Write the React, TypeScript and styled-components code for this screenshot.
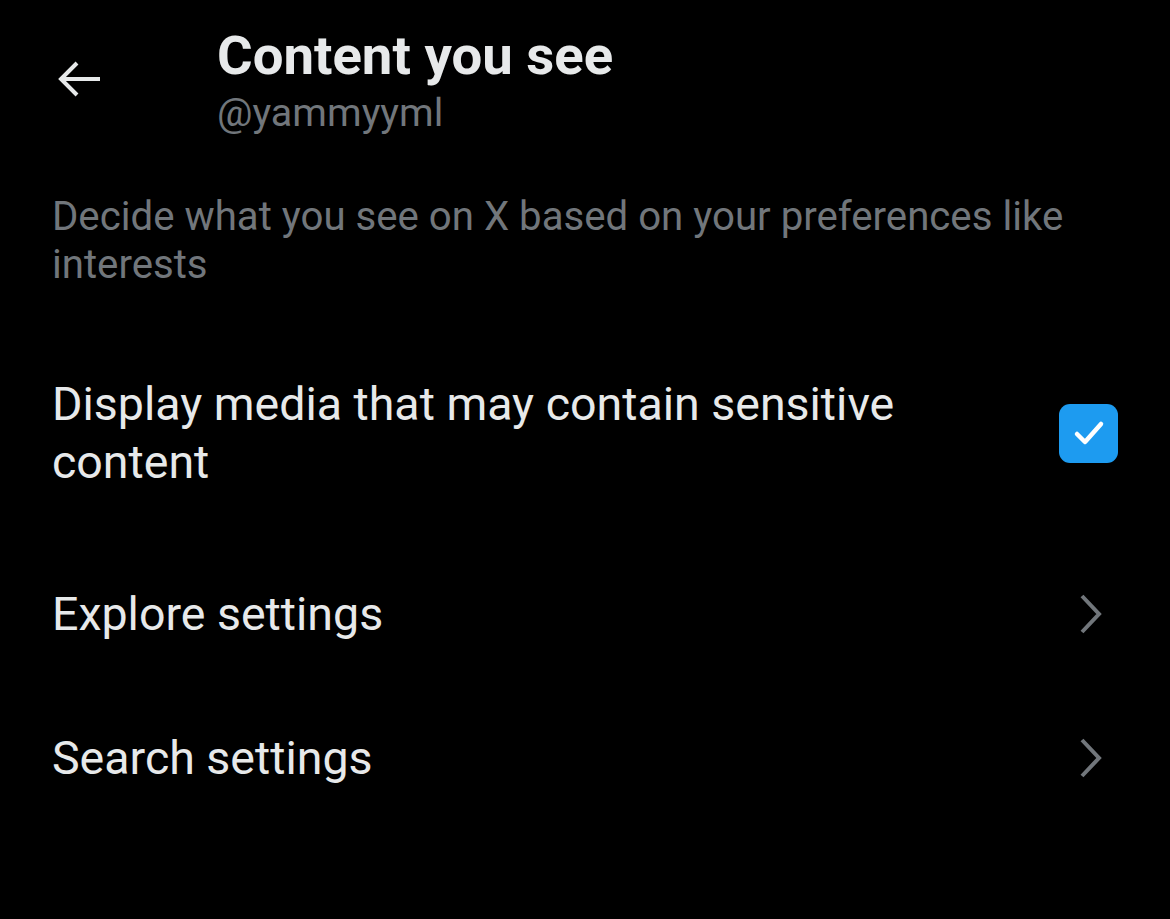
import React from "react";
import styled, { createGlobalStyle } from "styled-components";

const Global = createGlobalStyle`
  html, body { margin: 0; padding: 0; background: #000; }
  body { font-family: Roboto, "Noto Sans", sans-serif; color: #e7e9ea; }
`;

const Page = styled.div`
  width: 1170px;
  height: 919px;
  background: #000;
  overflow: hidden;
  display: flex;
  flex-direction: column;
`;

const Header = styled.header`
  display: flex;
  align-items: flex-start;
  padding: 23px 0 0 52px;
`;

const BackButton = styled.button`
  width: 54px;
  height: 54px;
  margin-top: 29px;
  margin-right: 111px;
  padding: 0;
  background: none;
  border: none;
  color: #e7e9ea;
  display: flex;
  align-items: center;
  justify-content: center;
`;

const TitleBlock = styled.div`
  display: flex;
  flex-direction: column;
`;

const Title = styled.h1`
  margin: 0;
  font-size: 54.5px;
  line-height: 64px;
  font-weight: 700;
  color: #e7e9ea;
`;

const Handle = styled.div`
  margin-top: 2px;
  font-size: 39.5px;
  line-height: 48px;
  color: #71767b;
`;

const Description = styled.p`
  margin: 56px 52px 0;
  font-size: 40.2px;
  line-height: 48px;
  color: #71767b;
  max-width: 1040px;
`;

const List = styled.div`
  display: flex;
  flex-direction: column;
  margin-top: 35px;
`;

const Row = styled.div<{ $h: number }>`
  display: flex;
  align-items: center;
  justify-content: space-between;
  height: ${(p) => p.$h}px;
  padding: 0 52px;
`;

const Label = styled.div`
  font-size: 46.5px;
  line-height: 58px;
  color: #e7e9ea;
  max-width: 900px;
`;

const Checkbox = styled.div`
  width: 59px;
  height: 59px;
  border-radius: 11px;
  background: #1d9bf0;
  display: flex;
  align-items: center;
  justify-content: center;
  flex-shrink: 0;
`;

const Chevron = styled.svg`
  width: 30px;
  height: 42px;
  margin-right: 12px;
  flex-shrink: 0;
`;

const ChevronIcon = () => (
  <Chevron viewBox="0 0 30 42">
    <path d="M6 3 L23 21 L6 39" fill="none" stroke="#71767b" strokeWidth="4" />
  </Chevron>
);

export default function App() {
  return (
    <>
      <Global />
      <Page>
        <Header>
          <BackButton aria-label="Back">
            <svg width="46" height="40" viewBox="0 0 46 40">
              <path
                d="M44 20 H5 M21 4 L5 20 L21 36"
                fill="none"
                stroke="#e7e9ea"
                strokeWidth="4"
                strokeLinejoin="miter"
              />
            </svg>
          </BackButton>
          <TitleBlock>
            <Title>Content you see</Title>
            <Handle>@yammyyml</Handle>
          </TitleBlock>
        </Header>
        <Description>
          Decide what you see on X based on your preferences like interests
        </Description>
        <List>
          <Row $h={218}>
            <Label>Display media that may contain sensitive content</Label>
            <Checkbox>
              <svg width="34" height="34" viewBox="0 0 34 34">
                <path
                  d="M5 18 L13 26 L29 8"
                  fill="none"
                  stroke="#fff"
                  strokeWidth="4.5"
                  strokeLinecap="round"
                  strokeLinejoin="round"
                />
              </svg>
            </Checkbox>
          </Row>
          <Row $h={144}>
            <Label>Explore settings</Label>
            <ChevronIcon />
          </Row>
          <Row $h={144}>
            <Label>Search settings</Label>
            <ChevronIcon />
          </Row>
        </List>
      </Page>
    </>
  );
}
